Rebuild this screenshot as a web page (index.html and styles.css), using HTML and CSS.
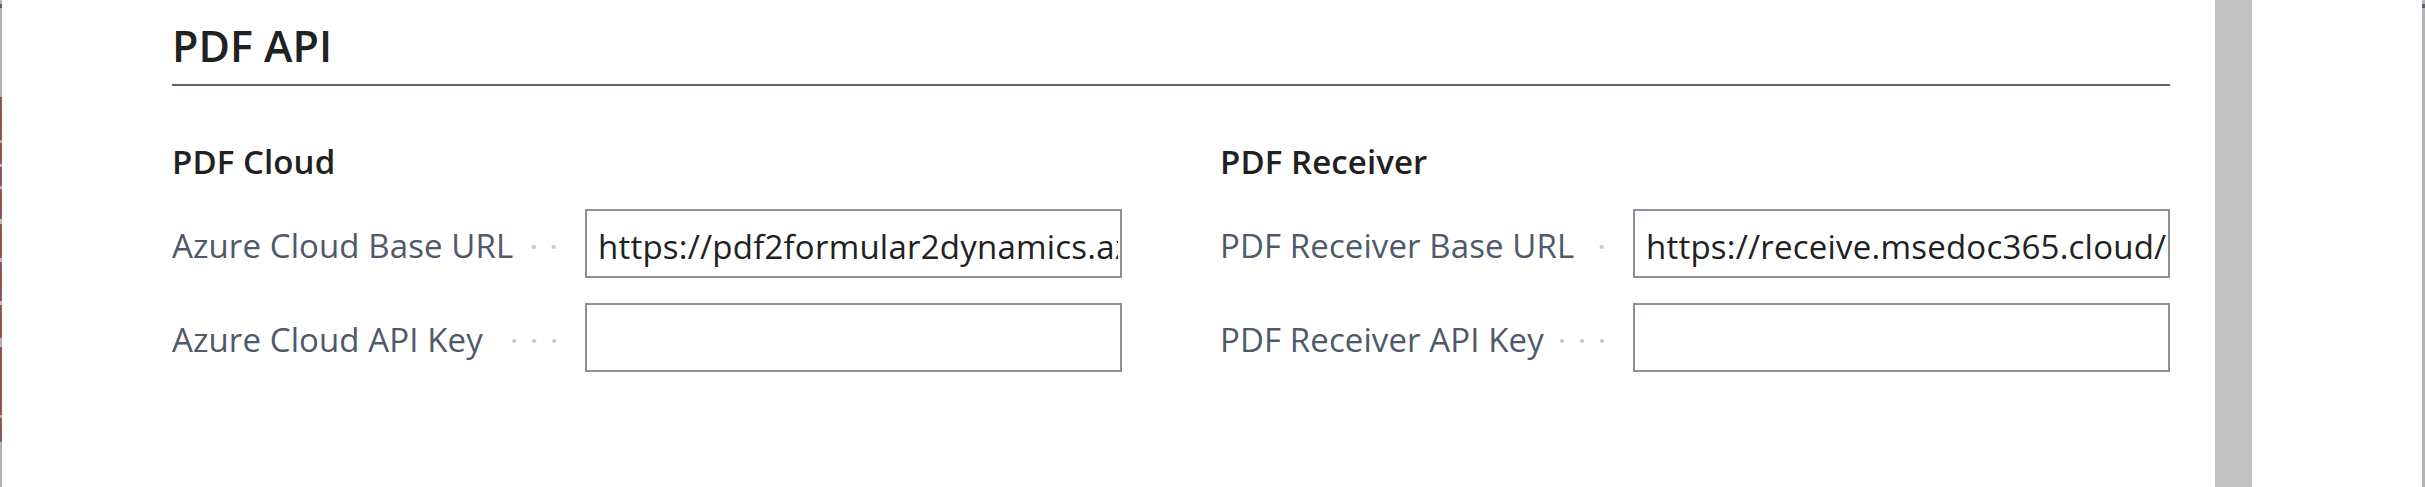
FILE: index.html
```html
<!DOCTYPE html>
<html lang="de">
<head>
<meta charset="utf-8">
<title>PDF API</title>
<link rel="stylesheet" href="styles.css">
</head>
<body>
<div class="edge edge-left"></div>
<main class="main">
  <header class="section-head">
    <h1 class="section-title">PDF API</h1>
  </header>
  <div class="groups">
    <section class="group">
      <h2 class="group-title">PDF Cloud</h2>
      <div class="field">
        <div class="field-label"><span class="label-text">Azure Cloud Base URL</span><span class="dots"></span></div>
        <input class="field-input" type="text" value="https://pdf2formular2dynamics.azurewebsites.net/" readonly>
      </div>
      <div class="field">
        <div class="field-label"><span class="label-text">Azure Cloud API Key</span><span class="dots"></span></div>
        <input class="field-input" type="text" value="" readonly>
      </div>
    </section>
    <section class="group">
      <h2 class="group-title">PDF Receiver</h2>
      <div class="field">
        <div class="field-label"><span class="label-text">PDF Receiver Base URL</span><span class="dots"></span></div>
        <input class="field-input" type="text" value="https://receive.msedoc365.cloud/api" readonly>
      </div>
      <div class="field">
        <div class="field-label"><span class="label-text">PDF Receiver API Key</span><span class="dots"></span></div>
        <input class="field-input" type="text" value="" readonly>
      </div>
    </section>
  </div>
</main>
<div class="scrollbar"><div class="scroll-thumb"></div></div>
<div class="side-space"></div>
<div class="edge edge-right"></div>
</body>
</html>
```

FILE: styles.css
```css
html, body {
  margin: 0;
  padding: 0;
  background: #ffffff;
}

body {
  display: flex;
  height: 487px;
  overflow: hidden;
  font-family: "Open Sans", "Noto Sans", "Liberation Sans", sans-serif;
  color: #212121;
}

.edge {
  flex: none;
  height: 100%;
}

.edge-left {
  width: 2px;
  background: linear-gradient(to bottom,
    #b3b3b3 0, #b3b3b3 4px,
    #5c6270 4px, #5c6270 8px,
    #b3b3b3 8px, #b3b3b3 97px,
    #8e5656 97px, #8e5656 140px,
    #c2a9a9 140px, #c2a9a9 143px,
    #8e5656 143px, #8e5656 164px,
    #bdbdbd 164px, #bdbdbd 167px,
    #8e5656 167px, #8e5656 186px,
    #bdbdbd 186px, #bdbdbd 189px,
    #8e5656 189px, #8e5656 219px,
    #bdbdbd 219px, #bdbdbd 224px,
    #8e5656 224px, #8e5656 258px,
    #bdbdbd 258px, #bdbdbd 262px,
    #8e5656 262px, #8e5656 301px,
    #bdbdbd 301px, #bdbdbd 305px,
    #8e5656 305px, #8e5656 338px,
    #b3b3b3 338px, #b3b3b3 347px,
    #8e5656 347px, #8e5656 415px,
    #c2a9a9 415px, #c2a9a9 418px,
    #8e5656 418px, #8e5656 442px,
    #b3b3b3 442px, #b3b3b3 487px);
}

.edge-right {
  width: 3px;
  background: linear-gradient(to bottom,
    #b3b3b3 0, #b3b3b3 4px,
    #5c6270 4px, #5c6270 8px,
    #b3b3b3 8px, #b3b3b3 100%);
}

.main {
  flex: 1;
  min-width: 0;
  padding: 0 45px 0 170px;
}

.section-head {
  padding-top: 17px;
  padding-bottom: 9px;
  border-bottom: 2px solid #5d6373;
}

.section-title {
  margin: 0;
  font-size: 43px;
  font-weight: 600;
  line-height: 58px;
  color: #212121;
}

.groups {
  display: grid;
  grid-template-columns: 1fr 1fr;
  column-gap: 98px;
  margin-top: 54px;
}

.group-title {
  margin: 0 0 25px 0;
  font-size: 33px;
  font-weight: 600;
  line-height: 44px;
  letter-spacing: 0.1px;
  color: #212121;
}

.field {
  display: grid;
  grid-template-columns: 413px 1fr;
  height: 69px;
  margin-bottom: 25px;
}

.field-label {
  display: flex;
  align-items: stretch;
  padding-right: 21px;
  min-width: 0;
}

.label-text {
  flex: none;
  padding-top: 5px;
  font-size: 33px;
  line-height: 64px;
  letter-spacing: 0.1px;
  color: #4f596a;
  white-space: nowrap;
}

.dots {
  flex: 1;
  margin-left: 16px;
  background-image: radial-gradient(circle at 10px 38px, #c9c9c9 0, #c9c9c9 1.7px, rgba(201, 201, 201, 0) 2.4px);
  background-size: 20px 69px;
  background-repeat: repeat-x;
  background-position: right top;
}

.field-input {
  box-sizing: border-box;
  width: 100%;
  height: 69px;
  margin: 0;
  padding: 5px 2px 0 11px;
  border: 2px solid #8b8f99;
  border-radius: 0;
  background: #ffffff;
  font-family: "Open Sans", "Noto Sans", "Liberation Sans", sans-serif;
  font-size: 33px;
  letter-spacing: 0.22px;
  color: #212121;
  outline: none;
}

.scrollbar {
  flex: none;
  width: 37px;
  height: 100%;
  background: #c1c1c1;
}

.scroll-thumb {
  height: 100%;
}

.side-space {
  flex: none;
  width: 170px;
  height: 100%;
  background: #ffffff;
}
```
